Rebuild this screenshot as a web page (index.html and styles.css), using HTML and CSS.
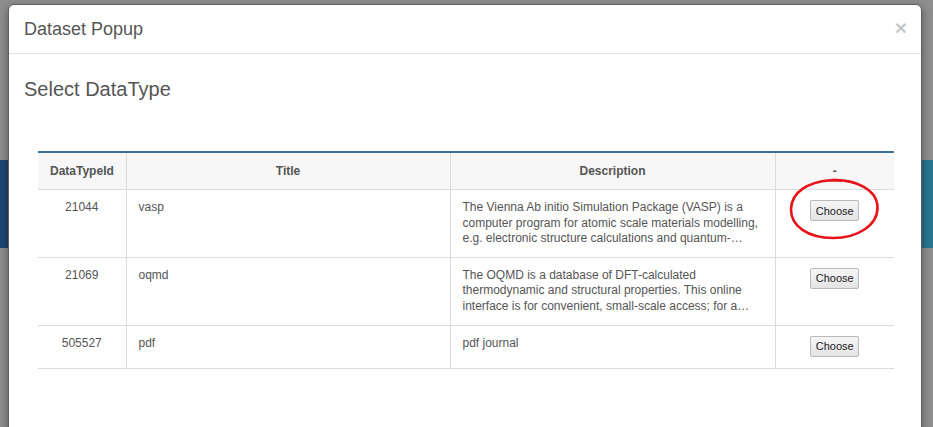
FILE: index.html
```html
<!DOCTYPE html>
<html>
<head>
<meta charset="utf-8">
<link rel="stylesheet" href="styles.css">
</head>
<body>
<div class="page">
  <div class="banner"></div>
</div>
<div class="modal">
  <div class="modal-header">
    <span class="modal-title">Dataset Popup</span>
    <span class="close">&times;</span>
  </div>
  <div class="modal-body">
    <h3 class="section-title">Select DataType</h3>
    <table class="grid">
      <colgroup>
        <col class="c-id"><col class="c-title"><col class="c-desc"><col class="c-act">
      </colgroup>
      <thead>
        <tr><th>DataTypeId</th><th>Title</th><th>Description</th><th>-</th></tr>
      </thead>
      <tbody>
        <tr>
          <td class="num">21044</td>
          <td>vasp</td>
          <td>The Vienna Ab initio Simulation Package (VASP) is a computer program for atomic scale materials modelling, e.g. electronic structure calculations and quantum-…</td>
          <td class="act"><span class="btn-wrap"><button class="btn">Choose</button><svg class="circle" width="92" height="64" viewBox="0 0 92 64"><path d="M40 3.5 C66 1 89 12 89.5 30 C90 48 70 61 45 61 C20 61 2.5 49 3 32 C3.5 15 20 5 42 3.2 C46 3 50 3.2 53 3.6" fill="none" stroke="#e8121a" stroke-width="2.6" stroke-linecap="round"/></svg></span></td>
        </tr>
        <tr>
          <td class="num">21069</td>
          <td>oqmd</td>
          <td>The OQMD is a database of DFT-calculated thermodynamic and structural properties. This online interface is for convenient, small-scale access; for a…</td>
          <td class="act"><button class="btn">Choose</button></td>
        </tr>
        <tr class="last">
          <td class="num">505527</td>
          <td>pdf</td>
          <td>pdf journal</td>
          <td class="act"><button class="btn">Choose</button></td>
        </tr>
      </tbody>
    </table>
  </div>
</div>
</body>
</html>
```

FILE: styles.css
```css
html, body {
  margin: 0;
  padding: 0;
  height: 100%;
  overflow: hidden;
}
body {
  background: #8e8e8e;
  font-family: "Liberation Sans", Arial, sans-serif;
  position: relative;
}
.page {
  padding-top: 160px;
}
.banner {
  height: 88px;
  background: linear-gradient(90deg, #1b4670 0%, #1b4670 60%, #2a7690 100%);
}
.modal {
  position: absolute;
  left: 8px;
  top: 4px;
  width: 912px;
  height: 470px;
  background: #fff;
  border: 1px solid #5f5f5f;
  border-radius: 6px;
  box-shadow: 0 3px 9px rgba(0,0,0,0.4);
}
.modal-header {
  display: flex;
  justify-content: space-between;
  align-items: center;
  padding: 14px 15px;
  border-bottom: 1px solid #e5e5e5;
  line-height: 20px;
}
.modal-title {
  font-size: 18px;
  color: #555;
}
.close {
  font-size: 21px;
  font-weight: bold;
  color: #c8c8c8;
  line-height: 20px;
  margin-right: -1px;
  margin-top: -3px;
}
.modal-body {
  padding: 24px 15px 15px 15px;
}
.section-title {
  margin: 0;
  font-size: 20px;
  font-weight: normal;
  line-height: 22px;
  color: #555;
}
.grid {
  margin: 51px 0 0 14px;
  width: 856px;
  border-collapse: collapse;
  table-layout: fixed;
  font-size: 12px;
  color: #555;
}
.c-id { width: 88px; }
.c-title { width: 324px; }
.c-desc { width: 325px; }
.c-act { width: 119px; }
.grid thead tr {
  border-top: 2px solid #3e6f94;
  background: #f7f7f7;
}
.grid th {
  font-weight: bold;
  text-align: center;
  padding: 10px 12px 9px 12px;
  line-height: 17px;
  border-left: 1px solid #dcdcdc;
  color: #555;
}
.grid th:first-child, .grid td:first-child {
  border-left: none;
}
.grid td {
  border-top: 1px solid #dcdcdc;
  border-left: 1px solid #dcdcdc;
  padding: 10px 12px 10px 12px;
  line-height: 15.6px;
  vertical-align: top;
}
.grid tr.last td {
  border-bottom: 1px solid #dcdcdc;
  padding-bottom: 11px;
}
.grid td.num {
  text-align: center;
}
.grid td.act {
  text-align: center;
}
.btn-wrap {
  position: relative;
  display: inline-block;
}
.btn {
  font-family: "Liberation Sans", Arial, sans-serif;
  font-size: 11px;
  color: #222;
  height: 21px;
  width: 49px;
  padding: 0;
  background: linear-gradient(#f6f6f6, #e4e4e4);
  border: 1px solid #b9b9b9;
  border-radius: 2px;
  vertical-align: top;
}
.circle {
  position: absolute;
  left: -22px;
  top: -23px;
  pointer-events: none;
}
```
